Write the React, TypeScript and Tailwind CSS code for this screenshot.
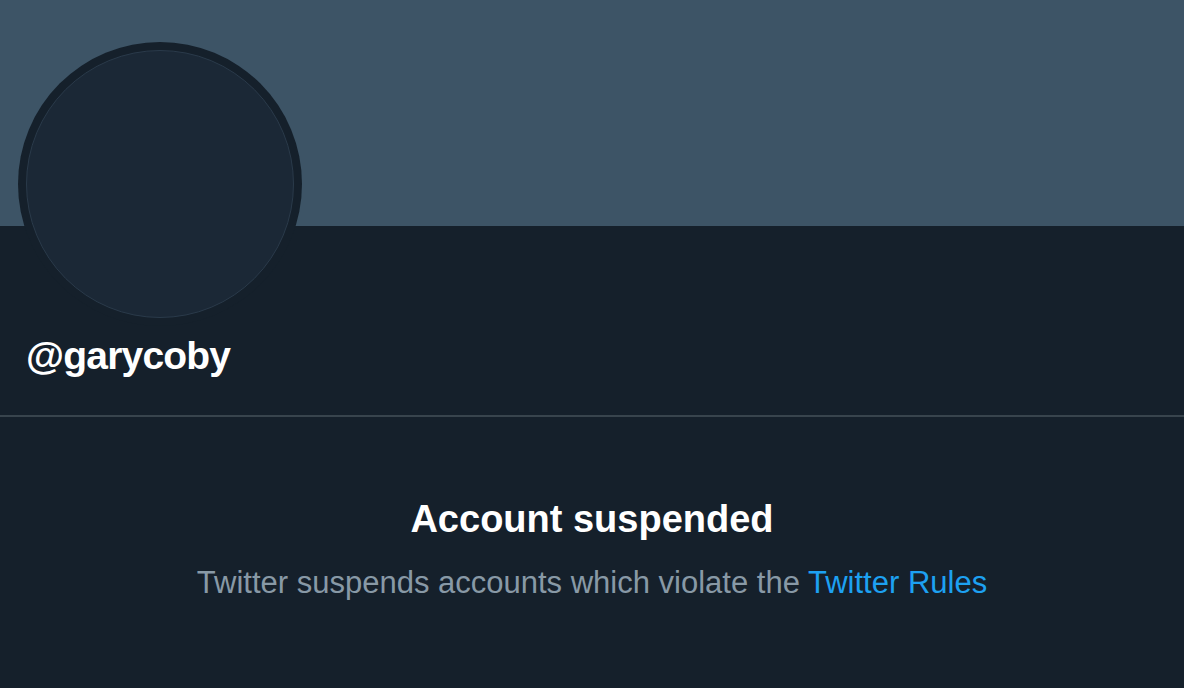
export default function App() {
  return (
    <div className="h-[688px] w-full overflow-hidden bg-[#15202b] font-['Liberation_Sans',Arial,sans-serif]">
      <div className="h-[226px] bg-[#3d5466]" />

      <div className="relative">
        {/* avatar overlaps the banner */}
        <div className="absolute left-[18px] top-[-184px] h-[284px] w-[284px] rounded-full bg-[#15202b] p-[8px]">
          <div className="h-full w-full rounded-full border border-[#2a3a4a] bg-[#1b2836]" />
        </div>

        <div className="px-[26px] pt-[108px] pb-[37px]">
          <h1 className="text-[39px] font-bold leading-[44px] tracking-[-0.8px] text-white">@garycoby</h1>
        </div>
      </div>

      <div className="h-[2px] bg-[#38444d]" />

      <div className="flex flex-col items-center pt-[80px] text-center">
        <h2 className="text-[38px] font-bold leading-[44px] text-white">Account suspended</h2>
        <p className="mt-[24px] text-[31px] leading-[36px] text-[#8899a6]">
          Twitter suspends accounts which violate the{' '}
          <a href="#" className="text-[#1da1f2]">Twitter Rules</a>
        </p>
      </div>
    </div>
  );
}
